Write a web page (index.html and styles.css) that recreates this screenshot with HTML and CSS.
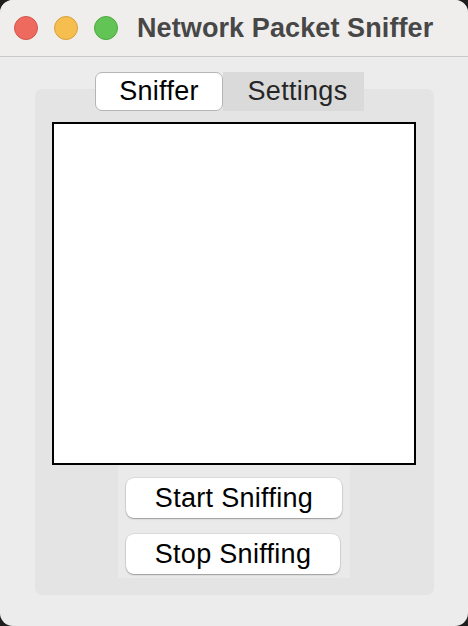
FILE: index.html
```html
<!DOCTYPE html>
<html>
<head>
<meta charset="utf-8">
<link rel="stylesheet" href="styles.css">
</head>
<body>
<div class="window">
  <div class="titlebar">
    <div class="lights">
      <span class="light red"></span>
      <span class="light yellow"></span>
      <span class="light green"></span>
    </div>
    <div class="title">Network Packet Sniffer</div>
  </div>
  <div class="content">
    <div class="tabs">
      <div class="tab active">Sniffer</div>
      <div class="tab inactive">Settings</div>
    </div>
    <div class="pane">
      <div class="textarea"></div>
      <div class="buttons">
        <button class="btn start">Start Sniffing</button>
        <button class="btn stop">Stop Sniffing</button>
      </div>
    </div>
  </div>
</div>
</body>
</html>
```
FILE: styles.css
```css
html, body {
  margin: 0;
  padding: 0;
  background: #1e1e1e;
}
body {
  width: 468px;
  height: 626px;
  overflow: hidden;
  font-family: "Liberation Sans", Arial, sans-serif;
}
.window {
  width: 468px;
  height: 626px;
  background: #ececec;
  border-radius: 13px;
  overflow: hidden;
  display: flex;
  flex-direction: column;
}
.titlebar {
  height: 57px;
  box-sizing: border-box;
  background: #efeeec;
  border-bottom: 1px solid #c8c8c8;
  display: flex;
  align-items: center;
  padding-left: 14px;
}
.lights {
  display: flex;
  gap: 16px;
}
.light {
  width: 24px;
  height: 24px;
  border-radius: 50%;
  box-sizing: border-box;
}
.red { background: #ee6a5e; border: 1px solid #d5544a; }
.yellow { background: #f5be4f; border: 1px solid #d9a03c; }
.green { background: #61c454; border: 1px solid #4ea83f; }
.title {
  margin-left: 19px;
  font-size: 27px;
  font-weight: bold;
  color: #474747;
  letter-spacing: 0.1px;
}
.content {
  padding-top: 15px;
  padding-left: 35px;
  display: flex;
  flex-direction: column;
}
.tabs {
  display: flex;
  margin-left: 60px;
  height: 39px;
  position: relative;
  z-index: 1;
}
.tab {
  height: 39px;
  box-sizing: border-box;
  display: flex;
  align-items: center;
  justify-content: center;
  font-size: 27px;
  letter-spacing: 0.3px;
  color: #262626;
  background: #dadada;
  width: 141px;
}
.tab.inactive {
  padding-left: 8px;
}
.tab.active {
  width: 128px;
  background: #ffffff;
  color: #000;
  border: 1px solid #b5b5b5;
  border-radius: 7px;
}
.pane {
  margin-top: -22px;
  width: 399px;
  height: 506px;
  box-sizing: border-box;
  background: #e4e4e4;
  border-radius: 7px;
  padding-top: 33px;
  padding-left: 17px;
  display: flex;
  flex-direction: column;
}
.textarea {
  width: 364px;
  height: 343px;
  box-sizing: border-box;
  border: 2px solid #000;
  background: #fff;
}
.buttons {
  margin-left: 66px;
  width: 232px;
  height: 113px;
  box-sizing: border-box;
  background: #eaeaea;
  padding: 13px 8px 4px 8px;
  display: flex;
  flex-direction: column;
  align-items: flex-start;
  gap: 16px;
}
.btn {
  height: 40px;
  border: none;
  border-radius: 8px;
  background: #fff;
  box-shadow: 0 0 0 0.5px rgba(0,0,0,0.12), 0 1px 1.5px rgba(0,0,0,0.3);
  font-family: "Liberation Sans", Arial, sans-serif;
  font-size: 27px;
  letter-spacing: 0.3px;
  color: #000;
  padding: 0;
}
.start { width: 216px; }
.stop { width: 214px; }
```
